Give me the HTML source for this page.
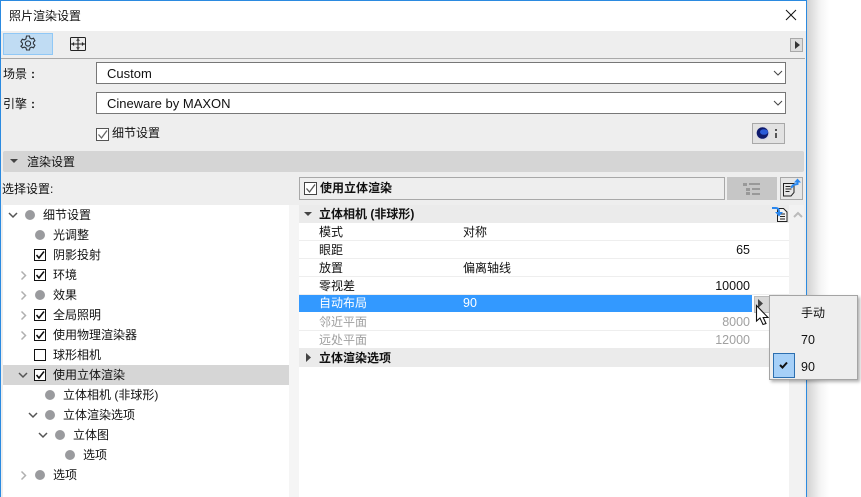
<!DOCTYPE html>
<html><head><meta charset="utf-8"><style>
html,body{margin:0;padding:0;background:#fff}
#p{position:relative;width:861px;height:497px;overflow:hidden;background:#fff;font-family:"Liberation Sans","Noto Sans CJK SC",sans-serif;font-size:12px;color:#111}
#p div,#p svg{position:absolute}
.t{white-space:nowrap;line-height:18px;height:18px}
.n{font-size:12.5px}
.sel{background:#fff;border:1px solid #777;box-sizing:border-box;height:22px;left:96px;width:690px}
.sel span{position:absolute;left:10px;top:2px;font-size:13px;line-height:17px}
.cb{width:12px;height:12px;border:1px solid #111;background:#fff;box-sizing:border-box}
.dot{width:10px;height:10px;border-radius:50%;background:#9a9b9e}
.rule{left:299px;width:490px;height:1px;background:#eee}
.b{font-weight:bold}
</style></head><body><div id="p">
<div style="left:807px;top:0;width:22px;height:497px;background:linear-gradient(90deg,#d2d2d2,#f4f4f4 60%,#fff)"></div>
<div style="left:0;top:0;width:807px;height:497px;background:#eee"></div>
<div style="left:0;top:0;width:807px;height:31px;background:#fff"></div>
<div style="left:0;top:0;width:807px;height:1px;background:#2b8ae0"></div>
<div style="left:0;top:0;width:1px;height:497px;background:#2b8ae0"></div>
<div style="left:806px;top:0;width:1px;height:497px;background:#2b8ae0"></div>
<div class="t" style="left:9px;top:7px">照片渲染设置</div>
<svg style="left:785px;top:9px" width="12" height="12" viewBox="0 0 12 12"><path d="M1 1L11 11M11 1L1 11" stroke="#111" stroke-width="1" fill="none"/></svg>

<div style="left:3px;top:33px;width:48px;height:20px;background:#c0dcf3;border:1px solid #90c8f6"></div>
<svg style="left:20px;top:35px" width="16" height="17" viewBox="0 0 16 17" fill="none" stroke="#2f353c" stroke-width="1.100"><path d="M6.500 1h3l.4 2 1.700.9 1.900-.7 1.400 2.600-1.500 1.300v1.800l1.500 1.300-1.400 2.600-1.900-.7-1.700.9-.4 2h-3l-.4-2-1.700-.9-1.900.7L.9 11.200l1.500-1.300V8.100L.9 6.800l1.400-2.600 1.900.7 1.700-.9z"/><circle cx="8" cy="8.500" r="2.600"/></svg>
<svg style="left:70px;top:37px" width="16" height="14" viewBox="0 0 16 14" fill="none" stroke="#222" stroke-width="1"><rect x=".5" y=".5" width="15" height="13" rx="1"/><path d="M8 1v12M1 7h14"/><path d="M4 5.500L2.500 7L4 8.500M12 5.500L13.500 7L12 8.500M6.500 3.500L8 2.500L9.500 3.500M6.500 10.500L8 11.500L9.500 10.500" stroke-width=".9"/></svg>
<div style="left:790px;top:38px;width:11px;height:12px;border:1px solid #a8a8a8;background:#ddd"></div>
<svg style="left:794px;top:40px" width="7" height="10"><path d="M1 1L6 5L1 9Z" fill="#333"/></svg>
<div style="left:1px;top:58px;width:804px;height:1px;background:#a9a9a9"></div>

<div class="t" style="left:3px;top:65px">场景</div><div class="t" style="left:31px;top:65px;font-weight:bold">:</div>
<div class="sel" style="top:62px"><span>Custom</span></div>
<svg style="left:773px;top:70px" width="10" height="6"><path d="M1 1L5 5L9 1" stroke="#444" fill="none"/></svg>
<div class="t" style="left:3px;top:95px">引擎</div><div class="t" style="left:31px;top:95px;font-weight:bold">:</div>
<div class="sel" style="top:92px"><span>Cineware by MAXON</span></div>
<svg style="left:773px;top:100px" width="10" height="6"><path d="M1 1L5 5L9 1" stroke="#444" fill="none"/></svg>
<div style="left:96px;top:128px;width:11px;height:11px;border:1px solid #555;background:#fff"></div>
<svg style="left:97px;top:129px" width="12" height="12"><path d="M1.500 5.500L4.500 9L10 1.500" stroke="#666" stroke-width="1.300" fill="none"/></svg>
<div class="t" style="left:112px;top:124px">细节设置</div>
<div style="left:752px;top:123px;width:31px;height:19px;border:1px solid #a8a8a8;background:#e2e2e2"></div>
<svg style="left:756px;top:126px" width="15" height="15"><circle cx="7" cy="7.500" r="6.800" fill="#d8d8e4"/><circle cx="6.500" cy="7" r="5.800" fill="#0e1a6c"/><ellipse cx="8" cy="6" rx="4" ry="2.800" fill="#2a5ad8"/></svg>
<div style="left:775px;top:129px;width:2px;height:2px;background:#555"></div>
<div style="left:775px;top:133px;width:2px;height:5px;background:#555"></div>

<div style="left:3px;top:151px;width:801px;height:21px;background:#d5d5d5;border-radius:2px"></div>
<svg style="left:10px;top:159px" width="10" height="6"><path d="M0 0H8L4 4Z" fill="#444"/></svg>
<div class="t" style="left:27px;top:153px">渲染设置</div>

<div class="t" style="left:2px;top:180px">选择设置:</div>
<div style="left:3px;top:205px;width:286px;height:292px;background:#fff"></div>
<div style="left:289px;top:205px;width:10px;height:292px;background:#f5f5f5"></div>
<div style="left:789px;top:205px;width:15px;height:292px;background:#f2f2f2"></div>
<div style="left:3px;top:365px;width:286px;height:20px;background:#d6d6d6"></div>

<svg style="left:8px;top:212px" width="11" height="7"><path d="M1 1L5 5L9 1" stroke="#555" stroke-width="1.500" fill="none"/></svg>
<div class="dot" style="left:25px;top:210px"></div>
<div class="t" style="left:43px;top:206px">细节设置</div>

<div class="dot" style="left:35px;top:230px"></div>
<div class="t" style="left:53px;top:226px">光调整</div>

<div class="cb" style="left:34px;top:249px"></div>
<svg style="left:35px;top:250px" width="11" height="11"><path d="M1.500 5L4 8L9 1.500" stroke="#111" stroke-width="1.600" fill="none"/></svg>
<div class="t" style="left:53px;top:246px">阴影投射</div>

<svg style="left:20px;top:270px" width="8" height="11"><path d="M1.500 1.500L5.500 5.500L1.500 9.500" stroke="#b0b0b0" stroke-width="1.500" fill="none"/></svg>
<div class="cb" style="left:34px;top:269px"></div>
<svg style="left:35px;top:270px" width="11" height="11"><path d="M1.500 5L4 8L9 1.500" stroke="#111" stroke-width="1.600" fill="none"/></svg>
<div class="t" style="left:53px;top:266px">环境</div>

<svg style="left:20px;top:290px" width="8" height="11"><path d="M1.500 1.500L5.500 5.500L1.500 9.500" stroke="#b0b0b0" stroke-width="1.500" fill="none"/></svg>
<div class="dot" style="left:35px;top:290px"></div>
<div class="t" style="left:53px;top:286px">效果</div>

<svg style="left:20px;top:310px" width="8" height="11"><path d="M1.500 1.500L5.500 5.500L1.500 9.500" stroke="#b0b0b0" stroke-width="1.500" fill="none"/></svg>
<div class="cb" style="left:34px;top:309px"></div>
<svg style="left:35px;top:310px" width="11" height="11"><path d="M1.500 5L4 8L9 1.500" stroke="#111" stroke-width="1.600" fill="none"/></svg>
<div class="t" style="left:53px;top:306px">全局照明</div>

<svg style="left:20px;top:330px" width="8" height="11"><path d="M1.500 1.500L5.500 5.500L1.500 9.500" stroke="#b0b0b0" stroke-width="1.500" fill="none"/></svg>
<div class="cb" style="left:34px;top:329px"></div>
<svg style="left:35px;top:330px" width="11" height="11"><path d="M1.500 5L4 8L9 1.500" stroke="#111" stroke-width="1.600" fill="none"/></svg>
<div class="t" style="left:53px;top:326px">使用物理渲染器</div>

<div class="cb" style="left:34px;top:349px"></div>
<div class="t" style="left:53px;top:346px">球形相机</div>

<svg style="left:18px;top:372px" width="11" height="7"><path d="M1 1L5 5L9 1" stroke="#555" stroke-width="1.500" fill="none"/></svg>
<div class="cb" style="left:34px;top:369px"></div>
<svg style="left:35px;top:370px" width="11" height="11"><path d="M1.500 5L4 8L9 1.500" stroke="#111" stroke-width="1.600" fill="none"/></svg>
<div class="t" style="left:53px;top:366px">使用立体渲染</div>

<div class="dot" style="left:45px;top:390px"></div>
<div class="t" style="left:63px;top:386px">立体相机 (非球形)</div>

<svg style="left:28px;top:412px" width="11" height="7"><path d="M1 1L5 5L9 1" stroke="#555" stroke-width="1.500" fill="none"/></svg>
<div class="dot" style="left:45px;top:410px"></div>
<div class="t" style="left:63px;top:406px">立体渲染选项</div>

<svg style="left:38px;top:432px" width="11" height="7"><path d="M1 1L5 5L9 1" stroke="#555" stroke-width="1.500" fill="none"/></svg>
<div class="dot" style="left:55px;top:430px"></div>
<div class="t" style="left:73px;top:426px">立体图</div>

<div class="dot" style="left:65px;top:450px"></div>
<div class="t" style="left:83px;top:446px">选项</div>

<svg style="left:20px;top:470px" width="8" height="11"><path d="M1.500 1.500L5.500 5.500L1.500 9.500" stroke="#b0b0b0" stroke-width="1.500" fill="none"/></svg>
<div class="dot" style="left:35px;top:470px"></div>
<div class="t" style="left:53px;top:466px">选项</div>

<div style="left:299px;top:177px;width:424px;height:21px;border:1px solid #a8a8a8;background:#eee"></div>
<div style="left:304px;top:182px;width:11px;height:11px;border:1px solid #444;background:#fff"></div>
<svg style="left:305px;top:183px" width="12" height="12"><path d="M1.500 5.500L4.500 9L10 1.500" stroke="#555" stroke-width="1.300" fill="none"/></svg>
<div class="t b" style="left:320px;top:179px">使用立体渲染</div>
<div style="left:727px;top:177px;width:50px;height:23px;background:#c6c6c6"></div>
<svg style="left:743px;top:182px" width="18" height="14" fill="#999"><rect x="0" y="1" width="4" height="3"/><rect x="6" y="1" width="11" height="2"/><rect x="3" y="6" width="4" height="3"/><rect x="9" y="6" width="8" height="2"/><rect x="3" y="10" width="4" height="3"/><rect x="9" y="11" width="8" height="2"/></svg>
<div style="left:780px;top:177px;width:21px;height:21px;border:1px solid #a8a8a8;background:#e6e6e6"></div>
<svg style="left:782px;top:178px" width="20" height="20" fill="none"><path d="M1.500 5.500h10.500v9l-3 3.500H1.500z" stroke="#222"/><path d="M3.500 8.500h5M3.500 11h6M3.500 13.500h4" stroke="#222"/><path d="M9.500 10C10 7 12 6.500 15.500 6V4" stroke="#2a88f0" stroke-width="2"/><path d="M12 4.500L15.500 .5L19 4.500Z" fill="#2a88f0"/></svg>

<div style="left:299px;top:205px;width:490px;height:292px;background:#fff"></div>
<div style="left:299px;top:205px;width:490px;height:18px;background:#ebebeb"></div>
<svg style="left:304px;top:212px" width="10" height="6"><path d="M0 0H8L4 4Z" fill="#444"/></svg>
<div class="t b" style="left:319px;top:205px">立体相机 (非球形)</div>
<svg style="left:771px;top:205px" width="18" height="18" fill="none"><path d="M6.500 3.500h6l3.500 3.500v9.500H6.500z" stroke="#222" fill="#f4f4f4"/><path d="M9 9h5M9 11.500h5M9 14h5" stroke="#222"/><path d="M1 3h4c2 0 3 1 3 4" stroke="#2a88f0" stroke-width="2"/><path d="M4 7h8l-4 4.500Z" fill="#2a88f0"/></svg>
<svg style="left:793px;top:211px" width="10" height="8"><path d="M1 6L5 2L9 6" stroke="#bbb" stroke-width="2" fill="none"/></svg>

<div class="rule" style="top:240px"></div>
<div class="rule" style="top:258px"></div>
<div class="rule" style="top:276px"></div>
<div class="rule" style="top:294px"></div>
<div class="rule" style="top:330px"></div>

<div class="t" style="left:319px;top:223px">模式</div><div class="t" style="left:463px;top:223px">对称</div>
<div class="t" style="left:319px;top:241px">眼距</div><div class="t n" style="left:650px;width:100px;text-align:right;top:241px">65</div>
<div class="t" style="left:319px;top:259px">放置</div><div class="t" style="left:463px;top:259px">偏离轴线</div>
<div class="t" style="left:319px;top:277px">零视差</div><div class="t n" style="left:650px;width:100px;text-align:right;top:277px">10000</div>

<div style="left:299px;top:295px;width:453px;height:17px;background:#3399ff"></div>
<div class="t" style="left:319px;top:294px;color:#fff">自动布局</div><div class="t n" style="left:463px;top:294px;color:#fff">90</div>
<div style="left:754px;top:296px;width:14px;height:15px;background:#d8d8d8;border:1px solid #bbb"></div>
<svg style="left:758px;top:299px" width="7" height="10"><path d="M0 0L5 4.500L0 9Z" fill="#444"/></svg>

<div class="t" style="left:319px;top:313px;color:#a0a0a0">邻近平面</div><div class="t n" style="left:650px;width:100px;text-align:right;top:313px;color:#a0a0a0">8000</div>
<div class="t" style="left:319px;top:331px;color:#a0a0a0">远处平面</div><div class="t n" style="left:650px;width:100px;text-align:right;top:331px;color:#a0a0a0">12000</div>

<div style="left:299px;top:348px;width:490px;height:19px;background:#ebebeb"></div>
<svg style="left:306px;top:353px" width="6" height="10"><path d="M0 0L5 4.500L0 9Z" fill="#444"/></svg>
<div class="t b" style="left:319px;top:349px">立体渲染选项</div>

<svg style="left:755px;top:304px" width="16" height="22"><path d="M1.500 1.500V17L5 14L8 20.500L11 19.500L8.200 13.500H13Z" fill="#fff" stroke="#111" stroke-width="1.100"/></svg>

<div style="left:769px;top:295px;width:89px;height:85px;background:#eee;border:1px solid #a4a4a4;box-sizing:border-box;box-shadow:2px 2px 3px rgba(0,0,0,.3)"></div>
<div class="t" style="left:801px;top:304px">手动</div>
<div class="t n" style="left:801px;top:331px">70</div>
<div style="left:773px;top:353px;width:20px;height:23px;background:#a6d0f8;border:1px solid #2c6fb0"></div>
<svg style="left:779px;top:361px" width="10" height="9"><path d="M1 4L3.500 6.500L8 1.500" stroke="#111" stroke-width="2" fill="none"/></svg>
<div class="t n" style="left:801px;top:358px">90</div>
</div></body></html>
